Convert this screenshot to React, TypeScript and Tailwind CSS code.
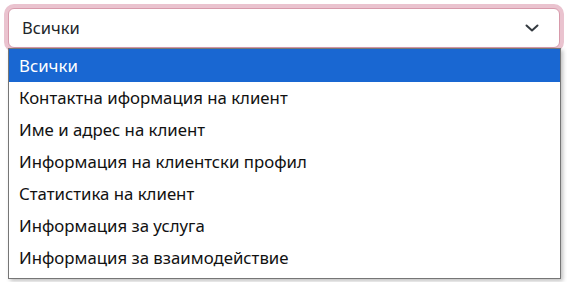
import React from "react";

const items = [
  "Всички",
  "Контактна иформация на клиент",
  "Име и адрес на клиент",
  "Информация на клиентски профил",
  "Статистика на клиент",
  "Информация за услуга",
  "Информация за взаимодействие",
];

export default function App() {
  return (
    <div className="w-[567px] h-[282px] bg-white relative" style={{ fontFamily: '"Noto Sans", sans-serif' }}>
      <div className="pt-[8px] px-[8px]">
        <div className="h-[40px] w-[552px] rounded-[6px] border border-[#d79aab] shadow-[0_0_0_4px_#eac3cf] bg-white flex items-center justify-between pl-[13px] pr-[20px] text-[16.5px] text-[#212529]">
          <span>Всички</span>
          <svg width="14" height="10" viewBox="0 0 14 10" fill="none">
            <path d="M1.5 2.5 L7 7.5 L12.5 2.5" stroke="#343a40" strokeWidth="2" strokeLinecap="round" strokeLinejoin="round" />
          </svg>
        </div>
      </div>
      <div className="absolute left-[8px] top-[48px] w-[553px] h-[231px] bg-white border border-[#767676] shadow-[2px_2px_4px_rgba(0,0,0,0.25)] text-[16.8px] text-[#111]">
        {items.map((t, i) => (
          <div
            key={i}
            className={
              "flex items-center pl-[10px] " +
              (i === 0 ? "bg-[#1967d2] text-white h-[33px]" : "h-[32px]")
            }
          >
            {t}
          </div>
        ))}
      </div>
    </div>
  );
}
